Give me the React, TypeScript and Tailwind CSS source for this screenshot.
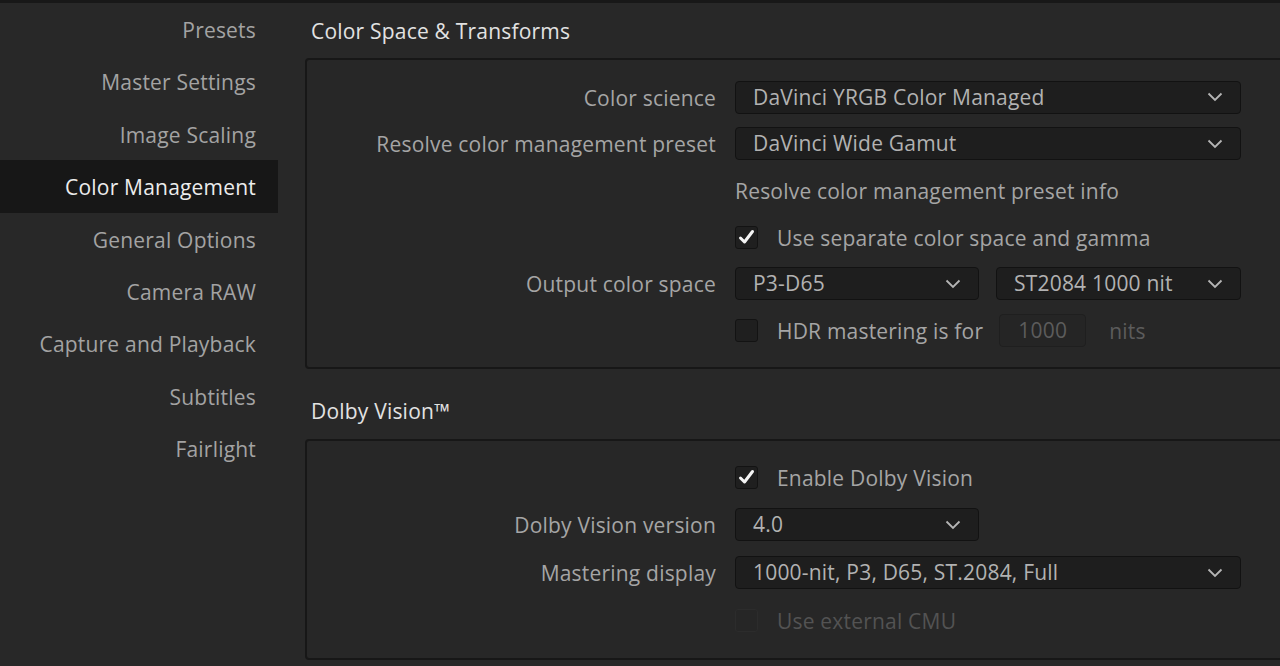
import type { ReactNode } from "react";

const font = { fontFamily: '"Open Sans", "Noto Sans", sans-serif' };

const navItems = [
  "Presets",
  "Master Settings",
  "Image Scaling",
  "Color Management",
  "General Options",
  "Camera RAW",
  "Capture and Playback",
  "Subtitles",
  "Fairlight",
];

const Chevron = () => (
  <svg width="16" height="10" viewBox="0 0 16 10" className="shrink-0">
    <path d="M1.5 1.5 L8 8 L14.5 1.5" fill="none" stroke="#b5b5b5" strokeWidth="1.8" />
  </svg>
);

const Select = ({ value, width }: { value: string; width: string }) => (
  <div
    className={`flex h-[33px] items-center justify-between rounded-[4px] border border-[#121212] bg-[#1e1e1e] pl-[17px] pr-[17px] text-[#b2b2b2] ${width}`}
  >
    <span>{value}</span>
    <Chevron />
  </div>
);

const Checkbox = ({ checked, disabled }: { checked?: boolean; disabled?: boolean }) => (
  <div
    className={`flex h-[23px] w-[23px] shrink-0 items-center justify-center rounded-[3px] border ${
      disabled ? "border-[#2c2c2c] bg-[#262626]" : "border-[#131313] bg-[#1f1f1f]"
    }`}
  >
    {checked && (
      <svg width="17" height="16" viewBox="0 0 17 16">
        <path d="M2.5 9 L6.5 13 L14.5 2.5" fill="none" stroke="#f5f5f5" strokeWidth="3" strokeLinecap="round" strokeLinejoin="round" />
      </svg>
    )}
  </div>
);

// plain text sits ~2px lower than Open Sans' line box centre in the reference
const Text = ({ children, className = "" }: { children: ReactNode; className?: string }) => (
  <span className={`pt-[3px] ${className}`}>{children}</span>
);

const Row = ({ label, h, children }: { label?: string; h: string; children: ReactNode }) => (
  <div className={`flex items-center ${h}`}>
    <div className="w-[428px] shrink-0 pt-[2px] pr-[19px] text-right text-[#a5a5a5]">{label}</div>
    <div className="flex items-center">{children}</div>
  </div>
);

const Heading = ({ children }: { children: ReactNode }) => (
  <div className="flex h-[55px] items-center pt-[2px] pl-[6px] text-[#e2e2e2]">{children}</div>
);

export default function App() {
  return (
    <div
      className="flex h-[666px] w-[1280px] overflow-hidden border-t-[3px] border-[#181818] bg-[#282828] text-[21px] tracking-[0.2px]"
      style={font}
    >
      <div className="flex w-[278px] shrink-0 flex-col">
        {navItems.map((item) => (
          <div
            key={item}
            className={`flex h-[52.4px] items-center justify-end pt-[3px] pr-[22px] ${
              item === "Color Management" ? "bg-[#171717] text-[#ececec]" : "text-[#a3a3a3]"
            }`}
          >
            {item}
          </div>
        ))}
      </div>

      <div className="flex flex-col pl-[27px]">
        <Heading>Color Space &amp; Transforms</Heading>
        <div className="w-[990px] rounded-tl-[4px] rounded-bl-[4px] border-2 border-[#171717] bg-[#272727] pt-[14px] pb-[13px]">
          <Row label="Color science" h="h-[46.6px]">
            <Select value="DaVinci YRGB Color Managed" width="w-[506px]" />
          </Row>
          <Row label="Resolve color management preset" h="h-[46.6px]">
            <Select value="DaVinci Wide Gamut" width="w-[506px]" />
          </Row>
          <Row h="h-[46.6px]">
            <Text className="text-[#a5a5a5]">Resolve color management preset info</Text>
          </Row>
          <Row h="h-[46.6px]">
            <Checkbox checked />
            <Text className="ml-[19px] text-[#a5a5a5]">Use separate color space and gamma</Text>
          </Row>
          <Row label="Output color space" h="h-[46.6px]">
            <Select value="P3-D65" width="w-[244px]" />
            <div className="ml-[17px]">
              <Select value="ST2084 1000 nit" width="w-[245px]" />
            </div>
          </Row>
          <Row h="h-[46.6px]">
            <Checkbox />
            <Text className="ml-[19px] text-[#a5a5a5]">HDR mastering is for</Text>
            <div className="ml-[16px] flex h-[33px] w-[87px] items-center justify-center rounded-[4px] border border-[#1f1f1f] bg-[#252525] pt-[1px] text-[#5c5c5c]">
              1000
            </div>
            <Text className="ml-[23px] text-[#5c5c5c]">nits</Text>
          </Row>
        </div>

        <div className="h-[15px]" />
        <Heading>Dolby Vision™</Heading>
        <div className="w-[990px] rounded-tl-[4px] rounded-bl-[4px] border-2 border-[#171717] bg-[#272727] pt-[13px] pb-[14px]">
          <Row h="h-[47.6px]">
            <Checkbox checked />
            <Text className="ml-[19px] text-[#a5a5a5]">Enable Dolby Vision</Text>
          </Row>
          <Row label="Dolby Vision version" h="h-[47.6px]">
            <Select value="4.0" width="w-[244px]" />
          </Row>
          <Row label="Mastering display" h="h-[47.6px]">
            <Select value="1000-nit, P3, D65, ST.2084, Full" width="w-[506px]" />
          </Row>
          <Row h="h-[47.6px]">
            <Checkbox disabled />
            <Text className="ml-[19px] text-[#535353]">Use external CMU</Text>
          </Row>
        </div>
      </div>
    </div>
  );
}
